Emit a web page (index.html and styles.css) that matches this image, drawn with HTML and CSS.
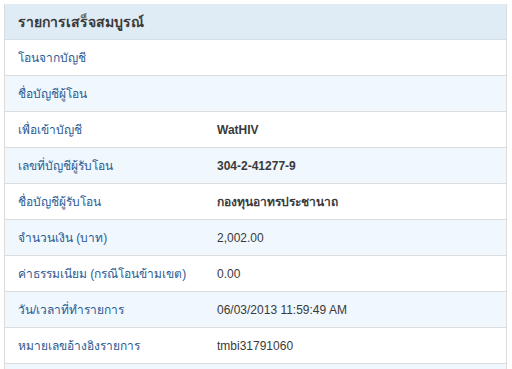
FILE: index.html
```html
<!DOCTYPE html>
<html lang="th">
<head>
<meta charset="utf-8">
<link rel="stylesheet" href="styles.css">
</head>
<body>
<div class="panel">
  <div class="head">รายการเสร็จสมบูรณ์</div>
  <div class="row"><div class="label">โอนจากบัญชี</div><div class="value"></div></div>
  <div class="row alt"><div class="label">ชื่อบัญชีผู้โอน</div><div class="value"></div></div>
  <div class="row"><div class="label">เพื่อเข้าบัญชี</div><div class="value bold">WatHIV</div></div>
  <div class="row alt"><div class="label">เลขที่บัญชีผู้รับโอน</div><div class="value bold">304-2-41277-9</div></div>
  <div class="row"><div class="label">ชื่อบัญชีผู้รับโอน</div><div class="value bold">กองทุนอาทรประชานาถ</div></div>
  <div class="row alt"><div class="label">จำนวนเงิน (บาท)</div><div class="value">2,002.00</div></div>
  <div class="row"><div class="label">ค่าธรรมเนียม (กรณีโอนข้ามเขต)</div><div class="value">0.00</div></div>
  <div class="row alt"><div class="label">วัน/เวลาที่ทำรายการ</div><div class="value">06/03/2013 11:59:49 AM</div></div>
  <div class="row"><div class="label">หมายเลขอ้างอิงรายการ</div><div class="value">tmbi31791060</div></div>
  <div class="filler alt"></div>
</div>
</body>
</html>
```

FILE: styles.css
```css
html, body {
  margin: 0;
  padding: 0;
  background: #ffffff;
}
body {
  padding: 4px 0 0 4px;
  font-family: "Liberation Sans", Arial, Tahoma, sans-serif;
  font-size: 12px;
}
.panel {
  width: 501px;
  border-left: 1px solid #dcdcdc;
  border-right: 1px solid #dcdcdc;
}
.head {
  height: 36px;
  box-sizing: border-box;
  background: #dfebf5;
  border-bottom: 1px solid #d6dde3;
  display: flex;
  align-items: center;
  padding-left: 13px;
  font-size: 14px;
  font-weight: bold;
  color: #3a3a3a;
}
.row {
  display: grid;
  grid-template-columns: 199px 1fr;
  height: 36px;
  box-sizing: border-box;
  border-bottom: 1px solid #dcdcdc;
  align-items: center;
  background: #ffffff;
}
.alt {
  background: #f0f7fd;
}
.row.alt {
  background: #f0f7fd;
}
.filler {
  height: 5px;
}
.label {
  padding-left: 13px;
  color: #2a5b94;
}
.value {
  padding-left: 13px;
  color: #3a3a3a;
}
.value.bold {
  font-weight: bold;
}
```
